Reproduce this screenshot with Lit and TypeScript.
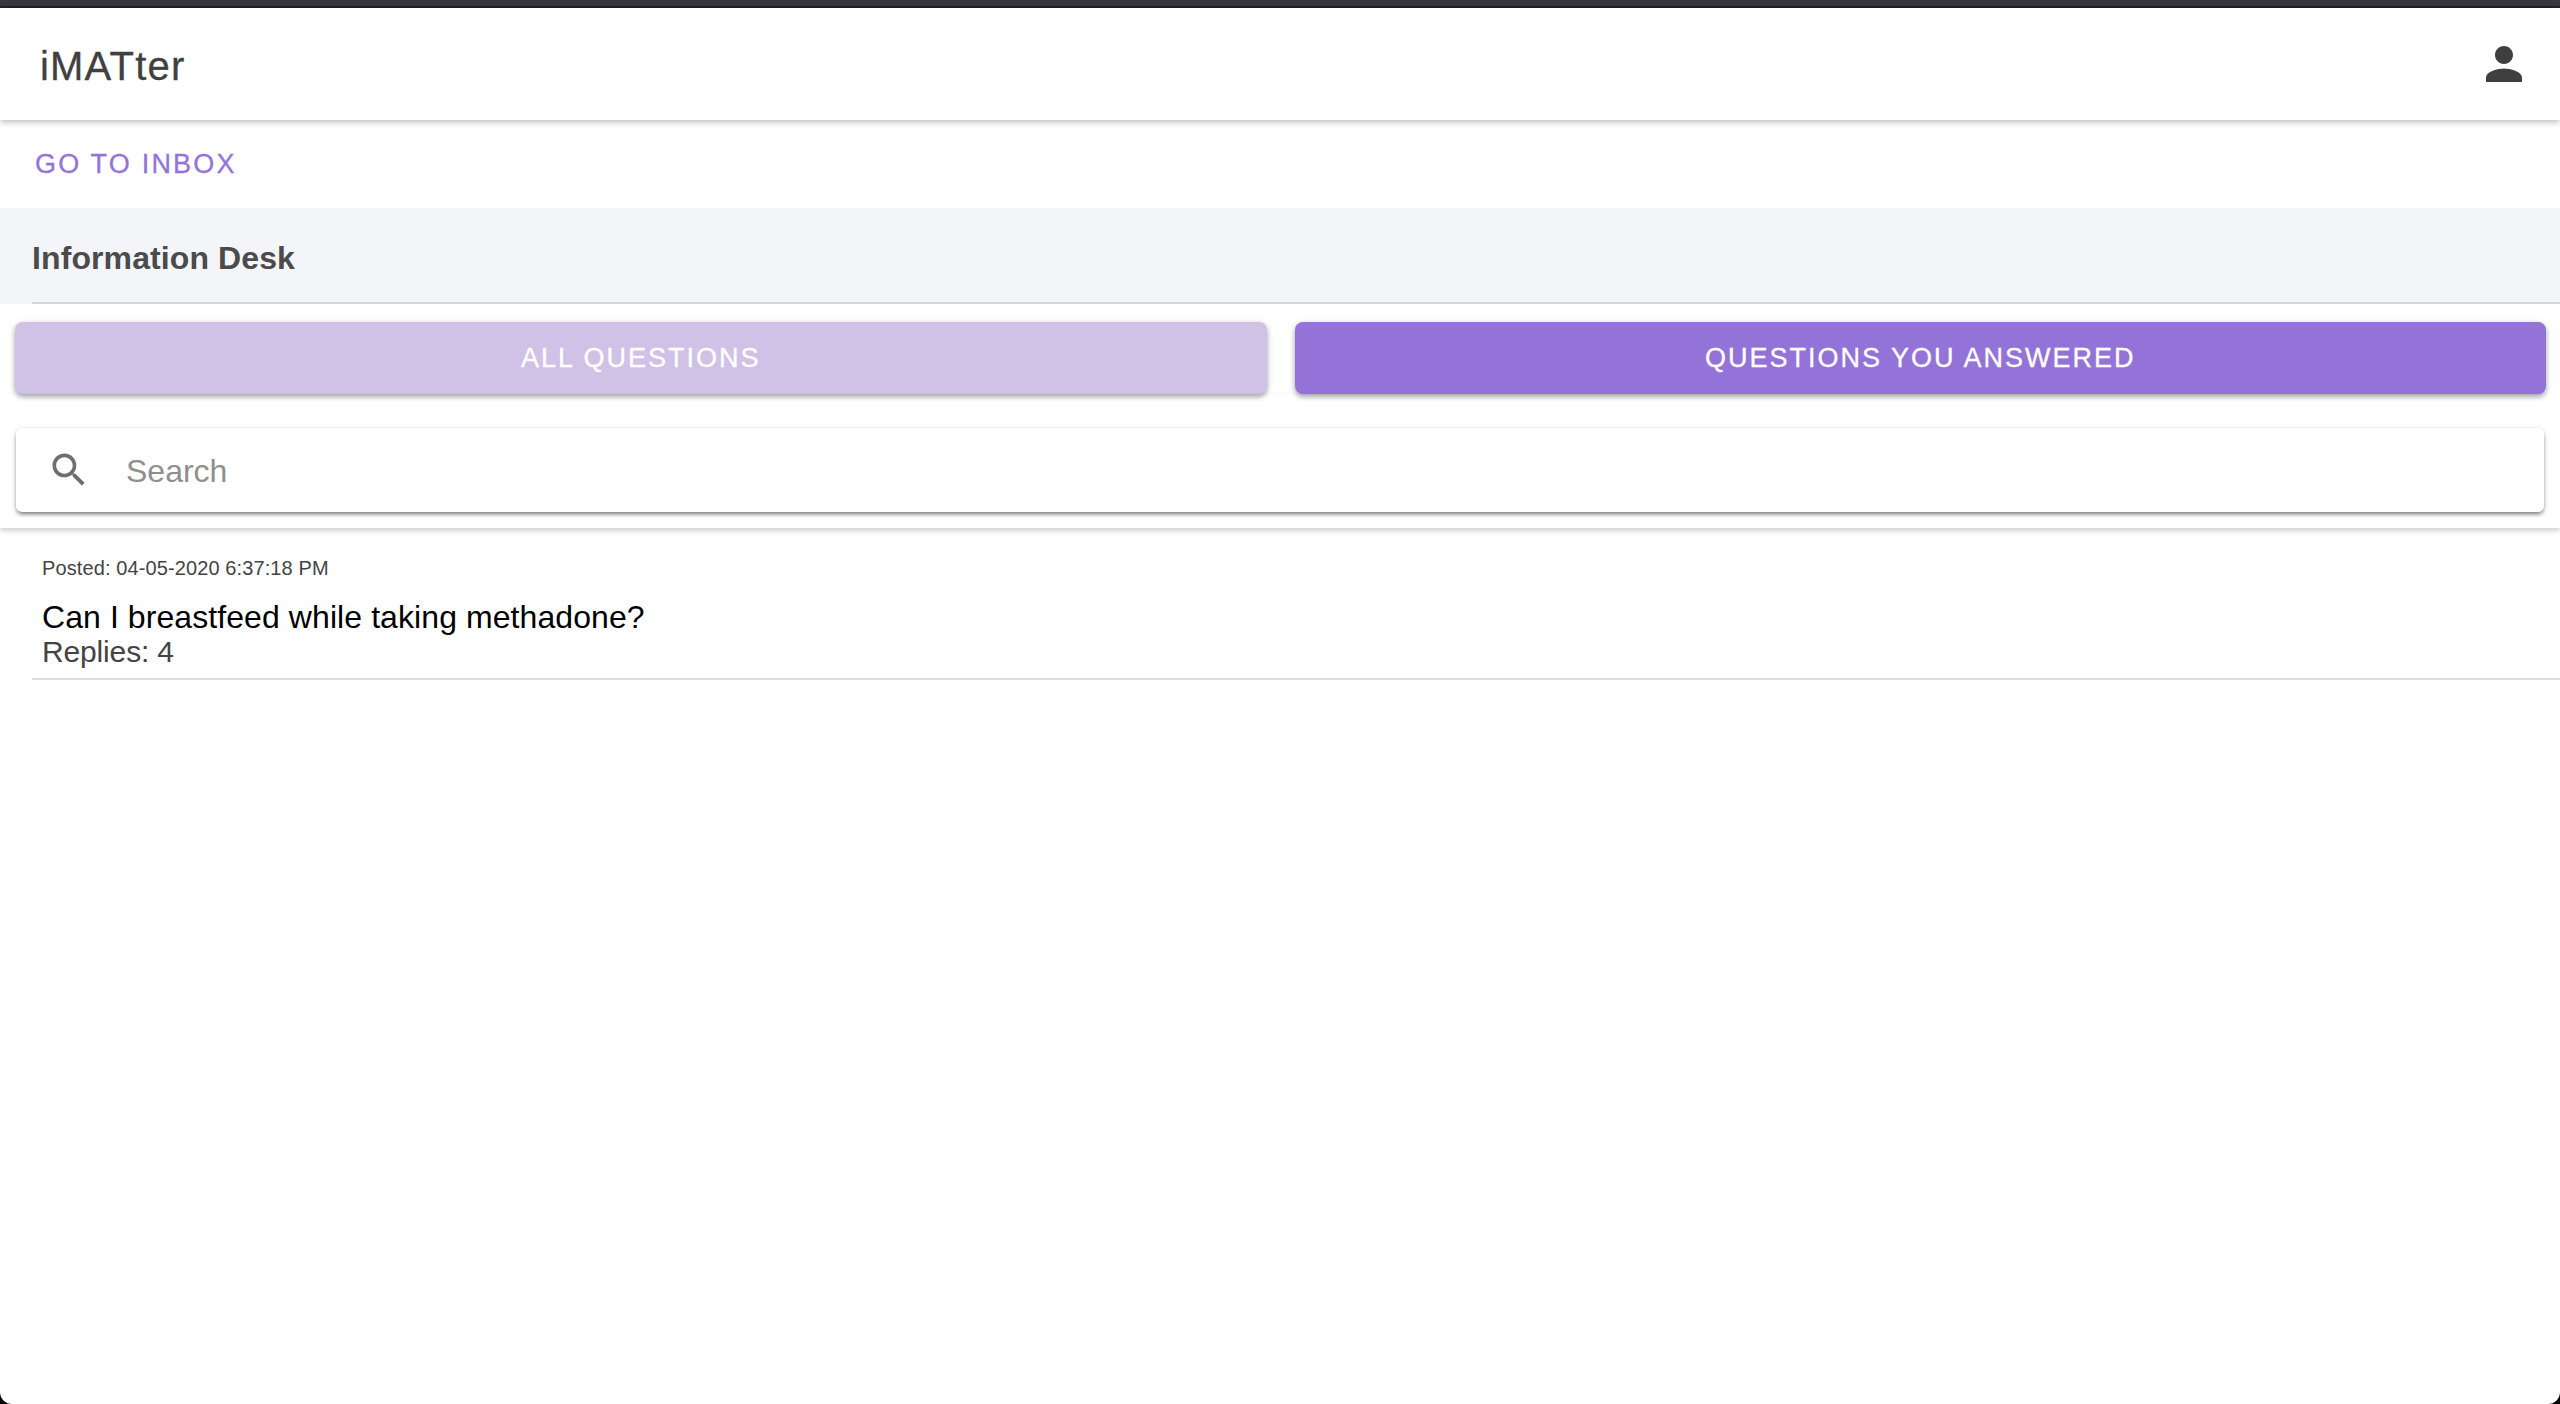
import { LitElement, html, css } from "lit";
import { customElement } from "lit/decorators.js";

@customElement("app-root")
export class AppRoot extends LitElement {
  static styles = css`
    :host { display: block; height: 100vh; background: #000; font-family: "Liberation Sans", Arial, sans-serif; }
    .screen { height: 100%; background: #fff; border-radius: 0 0 12px 12px; overflow: hidden; display: flex; flex-direction: column; }
    .topline { height: 8px; flex: none; background: #36373c; border-bottom: 2px solid #232326; box-sizing: border-box; }
    .appbar { height: 112px; flex: none; box-sizing: border-box; display: flex; align-items: center; justify-content: space-between; padding: 0 29px 0 40px; background: #fff; box-shadow: 0 2px 6px rgba(0,0,0,.28); position: relative; z-index: 2; }
    .brand { font-size: 40px; letter-spacing: 1.2px; color: #404040; -webkit-text-stroke: 0.3px #404040; line-height: 1; margin-top: 4px; }
    .person { width: 54px; height: 54px; fill: #3f3f3f; display: block; }
    .inbox { height: 88px; flex: none; display: flex; align-items: center; padding-left: 35px; box-sizing: border-box; }
    .inbox a { font-size: 27px; letter-spacing: 2.2px; color: #9473d8; -webkit-text-stroke: 0.3px #9473d8; }
    .desk { height: 96px; flex: none; background: #f4f5f9; padding-left: 32px; box-sizing: border-box; }
    .desk div { height: 96px; box-sizing: border-box; padding-top: 7px; border-bottom: 2px solid #d5d6dc; display: flex; align-items: center; font-size: 32px; letter-spacing: 0.1px; font-weight: 700; color: #4b4b4b; }
    .tabs { display: flex; gap: 28px; padding: 18px 14px 0 15px; flex: none; }
    .tab { flex: 1; height: 72px; border: 0; border-radius: 8px; color: #fff; -webkit-text-stroke: 0.3px #fff; font: 27px "Liberation Sans", Arial, sans-serif; letter-spacing: 2px; box-shadow: 0 3px 5px rgba(0,0,0,.3), 0 1px 8px rgba(0,0,0,.1); padding: 0; }
    .tab.off { background: #cfc2e6; }
    .tab.on { background: #9473d8; }
    .searchwrap { flex: none; padding: 34px 16px 16px; box-shadow: 0 3px 5px rgba(0,0,0,.18); position: relative; }
    .search { height: 84px; background: #fff; border-radius: 6px; display: flex; align-items: center; padding-left: 31px; box-sizing: border-box; box-shadow: 0 3px 4px -1px rgba(0,0,0,.5), 0 1px 6px rgba(0,0,0,.12); }
    .search svg { width: 44px; height: 44px; fill: #6e6e6e; flex: none; }
    .search span { margin-left: 35px; margin-top: 2px; font-size: 32px; color: #8f8f8f; }
    .item { margin-left: 32px; height: 152px; flex: none; box-sizing: border-box; border-bottom: 2px solid #dcdcdc; padding: 28px 0 0 10px; }
    .posted { font-size: 20px; letter-spacing: 0.11px; line-height: 24px; color: #444; }
    .q { font-size: 32px; letter-spacing: 0.08px; line-height: 36px; color: #000; margin-top: 19px; }
    .r { font-size: 30px; letter-spacing: -0.15px; line-height: 34px; color: #444; }
  `;

  render() {
    return html`<div class="screen">
      <div class="topline"></div>
      <header class="appbar">
        <span class="brand">iMATter</span>
        <svg class="person" viewBox="0 0 24 24"><path d="M12 12c2.21 0 4-1.79 4-4s-1.79-4-4-4-4 1.79-4 4 1.79 4 4 4zm0 2c-2.67 0-8 1.34-8 4v2h16v-2c0-2.66-5.33-4-8-4z"/></svg>
      </header>
      <div class="inbox"><a>GO TO INBOX</a></div>
      <div class="desk"><div>Information Desk</div></div>
      <div class="tabs">
        <button class="tab off">ALL QUESTIONS</button>
        <button class="tab on">QUESTIONS YOU ANSWERED</button>
      </div>
      <div class="searchwrap">
        <div class="search">
          <svg viewBox="0 0 24 24"><path d="M15.5 14h-.79l-.28-.27C15.41 12.59 16 11.11 16 9.5 16 5.91 13.09 3 9.5 3S3 5.91 3 9.5 5.91 16 9.5 16c1.61 0 3.09-.59 4.23-1.57l.27.28v.79l5 4.99L20.49 19l-4.99-5zm-6 0C7.01 14 5 11.99 5 9.5S7.01 5 9.5 5 14 7.01 14 9.5 11.99 14 9.5 14z"/></svg>
          <span>Search</span>
        </div>
      </div>
      <div class="item">
        <div class="posted">Posted: 04-05-2020 6:37:18 PM</div>
        <div class="q">Can I breastfeed while taking methadone?</div>
        <div class="r">Replies: 4</div>
      </div>
    </div>`;
  }
}
